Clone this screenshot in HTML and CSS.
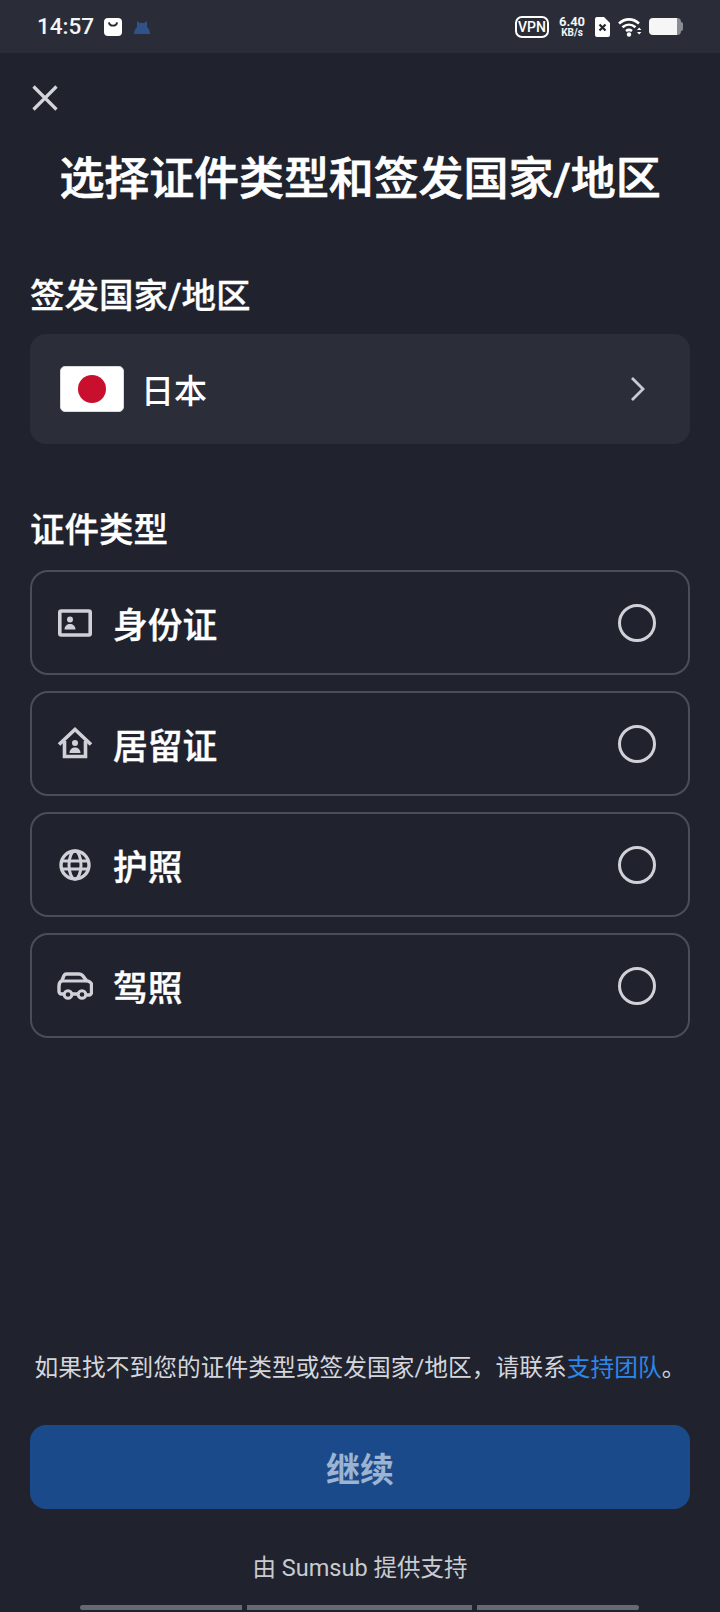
FILE: index.html
```html
<!DOCTYPE html>
<html lang="zh-CN">
<head>
<meta charset="utf-8">
<title>选择证件类型和签发国家/地区</title>
<link rel="stylesheet" href="styles.css">
</head>
<body>
<div class="screen">
  <header class="status">
    <div class="status-left">
      <span class="time">14:57</span>
      <svg class="ic-bag" viewBox="0 0 18 18"><rect width="18" height="18" rx="4" fill="#fff"/><path d="M5 5c1 3.600 7 3.600 8 0" fill="none" stroke="#23262f" stroke-width="1.800" stroke-linecap="round"/></svg>
      <svg class="ic-cat" viewBox="0 0 18 16"><path d="M1 15c0-3 1-5 3-7V2l3 2h4l3-2v6c2 2 3 4 3 7z" fill="#2f5288"/></svg>
    </div>
    <div class="status-right">
      <span class="vpn">VPN</span>
      <span class="speed"><b>6.40</b><i>KB/s</i></span>
      <svg class="ic-sim" viewBox="0 0 15 20"><path d="M2 0h7l6 6v12a2 2 0 0 1-2 2H2a2 2 0 0 1-2-2V2a2 2 0 0 1 2-2z" fill="#fff"/><path d="M4.500 7.500l6 6m0-6l-6 6" stroke="#23262f" stroke-width="2.200"/></svg>
      <svg class="ic-wifi" viewBox="0 0 24 20"><path d="M1 6.500c6-5.500 14-5.500 20 0M4.500 10.300c4-3.500 9-3.500 13 0M8 14c2-1.500 4-1.500 6 0" fill="none" stroke="#fff" stroke-width="2.600"/><circle cx="11" cy="17.500" r="2.200" fill="#fff"/><path d="M19 13l2.200-2.400 2.200 2.400zM19 15l2.200 2.400 2.200-2.400z" fill="#fff"/></svg>
      <span class="battery"><span class="battery-cap"></span></span>
    </div>
  </header>

  <main class="content">
    <button class="close" aria-label="关闭">
      <svg viewBox="0 0 26 26"><path d="M1.500 1.500l23 23m0-23l-23 23" stroke="#d3d5da" stroke-width="3.200" fill="none"/></svg>
    </button>
    <h1 class="title">选择证件类型和签发国家/地区</h1>

    <h2 class="label label-country">签发国家/地区</h2>
    <div class="select">
      <span class="flag"><span class="sun"></span></span>
      <span class="select-name">日本</span>
      <svg class="chev" viewBox="0 0 16 26"><path d="M2 2l11 11L2 24" fill="none" stroke="#c9cbd2" stroke-width="2.800"/></svg>
    </div>

    <h2 class="label label-type">证件类型</h2>
    <div class="options">
      <div class="option">
        <svg class="opt-ic" viewBox="0 0 36 36"><rect x="2.800" y="6" width="30.400" height="24" rx="1.500" fill="none" stroke="#cfd1d6" stroke-width="3.600"/><circle cx="13" cy="14.500" r="3" fill="#cfd1d6"/><path d="M7.500 24.500c0-7.500 11-7.500 11 0z" fill="#cfd1d6"/></svg>
        <span class="opt-name">身份证</span><span class="radio"></span>
      </div>
      <div class="option">
        <svg class="opt-ic" viewBox="0 0 36 36"><path d="M2 18.500L18 3.500l16 15" fill="none" stroke="#cfd1d6" stroke-width="3.600"/><path d="M7.500 15v15.500h21V15" fill="none" stroke="#cfd1d6" stroke-width="3.600"/><circle cx="18" cy="17" r="3" fill="#cfd1d6"/><path d="M12.500 27c0-7.500 11-7.500 11 0z" fill="#cfd1d6"/></svg>
        <span class="opt-name">居留证</span><span class="radio"></span>
      </div>
      <div class="option">
        <svg class="opt-ic" viewBox="0 0 36 36"><circle cx="18" cy="18" r="14" fill="none" stroke="#cfd1d6" stroke-width="3.400"/><ellipse cx="18" cy="18" rx="6" ry="14" fill="none" stroke="#cfd1d6" stroke-width="3"/><path d="M5 14h26M5 22h26" stroke="#cfd1d6" stroke-width="3"/></svg>
        <span class="opt-name">护照</span><span class="radio"></span>
      </div>
      <div class="option">
        <svg class="opt-ic" viewBox="0 0 36 36"><path d="M7 26H4.500a2.500 2.500 0 0 1-2.500-2.500V18c0-3 1-4.500 3-5.500l2-5C7.500 6.500 8 6 9.500 6H22c1.500 0 2.500.5 3.500 1.500l4 5 2.500 1c1.500.7 2.500 1.500 2.500 3v8a2.500 2.500 0 0 1-2.500 2.500h-2M15 26h6" fill="none" stroke="#cfd1d6" stroke-width="3.400"/><path d="M4 13h26" stroke="#cfd1d6" stroke-width="3"/><circle cx="11" cy="26.500" r="3.800" fill="none" stroke="#cfd1d6" stroke-width="3"/><circle cx="25" cy="26.500" r="3.800" fill="none" stroke="#cfd1d6" stroke-width="3"/></svg>
        <span class="opt-name">驾照</span><span class="radio"></span>
      </div>
    </div>
  </main>

  <footer class="foot">
    <p class="hint">如果找不到您的证件类型或签发国家/地区，请联系<a class="link">支持团队</a>。</p>
    <button class="continue">继续</button>
    <p class="powered">由 Sumsub 提供支持</p>
    <div class="progress"><span class="seg seg-a"></span><span class="seg seg-b"></span><span class="seg seg-c"></span></div>
  </footer>
</div>
</body>
</html>
```

FILE: styles.css
```css
* { box-sizing: border-box; margin: 0; padding: 0; }
html, body { width: 720px; height: 1612px; background: #20232e; overflow: hidden; }
body { font-family: Roboto, "Noto Sans CJK SC", sans-serif; color: #fff; }
.screen { width: 720px; height: 1612px; display: flex; flex-direction: column; }

.status { height: 53px; flex: none; background: #2a2d38; display: flex; justify-content: space-between; align-items: center; padding: 0 37px 0 37px; }
.status-left, .status-right { display: flex; align-items: center; }
.time { font: 500 22.500px/1 Roboto, sans-serif; color: #f4f5f6; }
.ic-bag { width: 18px; height: 18px; margin-left: 10px; }
.ic-cat { width: 18px; height: 16px; margin-left: 11px; }
.vpn { width: 34px; height: 22px; border: 2px solid #fff; border-radius: 7px; font: 500 14px/18px Roboto, sans-serif; text-align: center; }
.speed { display: flex; flex-direction: column; align-items: center; margin-left: 10px; width: 26px; color: #f4f5f6; }
.speed b { font-size: 13px; line-height: 13px; font-weight: 700; }
.speed i { font-size: 10px; line-height: 10px; font-style: normal; font-weight: 700; }
.ic-sim { width: 15px; height: 20px; margin-left: 10px; }
.ic-wifi { width: 24px; height: 20px; margin-left: 8px; }
.battery { width: 32px; height: 17px; margin: 0 2px 0 7px; border-radius: 4px; background: linear-gradient(90deg, #f6f6f7 88%, #8a8c93 88%); position: relative; }
.battery-cap { position: absolute; right: -2px; top: 4px; width: 2px; height: 9px; background: #8a8c93; border-radius: 0 2px 2px 0; }

.content { flex: 1; display: flex; flex-direction: column; padding: 0 30px; }
.close { width: 26px; height: 26px; margin: 32px 0 0 2px; background: none; border: 0; display: block; flex: none; }
.close svg { width: 26px; height: 26px; display: block; }
.title { font-size: 45px; line-height: 64px; font-weight: 500; -webkit-text-stroke: .7px #fff; text-align: center; margin-top: 37px; white-space: nowrap; letter-spacing: -.1px; }
.label { font-size: 34.500px; line-height: 48px; font-weight: 500; -webkit-text-stroke: .3px #fff; }
.label-country { margin-top: 60px; }
.select { height: 110px; margin-top: 14px; background: #2b2e39; border-radius: 16px; display: flex; align-items: center; padding: 0 44px 0 30px; }
.flag { width: 64px; height: 46px; background: #fff; border: 1px solid #d9dade; border-radius: 5px; display: flex; align-items: center; justify-content: center; flex: none; }
.sun { width: 28px; height: 28px; border-radius: 50%; background: #c8102e; }
.select-name { font-size: 33px; font-weight: 500; margin-left: 17px; flex: 1; }
.chev { width: 16px; height: 26px; }
.label-type { margin-top: 62px; }
.options { display: flex; flex-direction: column; gap: 16px; margin-top: 16px; }
.option { height: 105px; border: 2px solid #4b4e59; border-radius: 18px; display: flex; align-items: center; padding: 0 32px 0 25px; }
.opt-ic { width: 36px; height: 36px; flex: none; }
.opt-name { font-size: 34.700px; font-weight: 500; -webkit-text-stroke: .4px #fff; margin-left: 20px; flex: 1; }
.radio { width: 38px; height: 38px; border: 3.700px solid #cfd1d6; border-radius: 50%; flex: none; }

.foot { flex: none; display: flex; flex-direction: column; padding: 0 30px; }
.hint { font-size: 23.700px; letter-spacing: .05px; line-height: 36px; color: #d4d6db; white-space: nowrap; text-align: center; }
.link { color: #2d86ea; }
.continue { height: 84px; margin-top: 39px; background: #1b4a8a; border: 0; border-radius: 16px; font-family: inherit; font-size: 34px; font-weight: 700; color: #9cb4d2; }
.powered { font-size: 23.500px; line-height: 36px; color: #c9cbd1; text-align: center; margin-top: 41px; }
.progress { display: flex; gap: 5px; margin: 19px 0 0 50px; width: 560px; height: 7px; }
.seg { height: 5px; background: #666972; }
.seg-a { width: 162px; border-radius: 3px 0 0 3px; }
.seg-b { width: 225px; }
.seg-c { width: 162px; border-radius: 0 3px 3px 0; }
```
